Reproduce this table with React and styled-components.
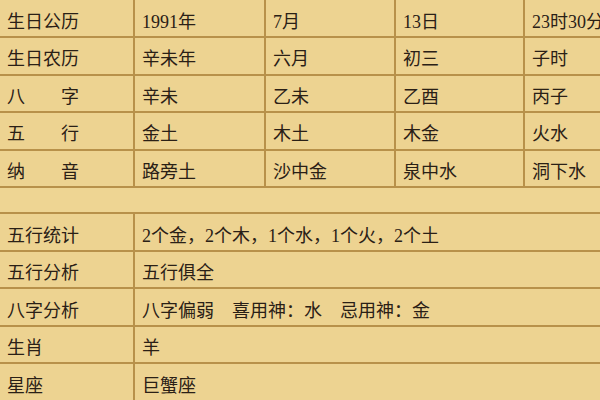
import React from 'react';
import styled, { createGlobalStyle } from 'styled-components';

const GlobalStyle = createGlobalStyle`
  html, body {
    margin: 0;
    padding: 0;
    width: 600px;
    height: 400px;
    overflow: hidden;
    background: #edd391;
  }
`;

const Page = styled.div`
  width: 600px;
  height: 400px;
  overflow: hidden;
  font-family: "Liberation Serif", "Noto Sans CJK SC", serif;
  font-size: 18px;
  color: #2a2016;
`;

const Grid = styled.div`
  display: grid;
  grid-template-columns: ${(p) => p.$cols};
  column-gap: 2px;
  row-gap: 2px;
  background: #b8914a;
  border-bottom: 2px solid #b8914a;
  width: 660px;
`;

const Cell = styled.div`
  background: #edd391;
  height: ${(p) => (p.$first ? '36.2px' : '35.5px')};
  display: flex;
  align-items: center;
  padding: 3px 0 0 ${(p) => (p.$lead ? '7px' : '7px')};
  box-sizing: border-box;
  white-space: nowrap;
`;

const Band = styled.div`
  height: 24.3px;
  background: #eed593;
  border-bottom: 2px solid #b8914a;
`;

const topRows = [
  ['生日公历', '1991年', '7月', '13日', '23时30分'],
  ['生日农历', '辛未年', '六月', '初三', '子时'],
  ['八　　字', '辛未', '乙未', '乙酉', '丙子'],
  ['五　　行', '金土', '木土', '木金', '火水'],
  ['纳　　音', '路旁土', '沙中金', '泉中水', '洞下水'],
];

const bottomRows = [
  ['五行统计', '2个金，2个木，1个水，1个火，2个土'],
  ['五行分析', '五行俱全'],
  ['八字分析', '八字偏弱　喜用神：水　忌用神：金'],
  ['生肖', '羊'],
  ['星座', '巨蟹座'],
];

export default function App() {
  return (
    <Page>
      <GlobalStyle />
      <Grid $cols="133px 129px 128px 127px 141px">
        {topRows.map((row, i) =>
          row.map((text, j) => (
            <Cell key={`${i}-${j}`} $first={i === 0} $lead={j === 0}>
              {text}
            </Cell>
          ))
        )}
      </Grid>
      <Band />
      <Grid $cols="133px 1fr">
        {bottomRows.map((row, i) =>
          row.map((text, j) => (
            <Cell key={`${i}-${j}`} $lead={j === 0}>
              {text}
            </Cell>
          ))
        )}
      </Grid>
    </Page>
  );
}
